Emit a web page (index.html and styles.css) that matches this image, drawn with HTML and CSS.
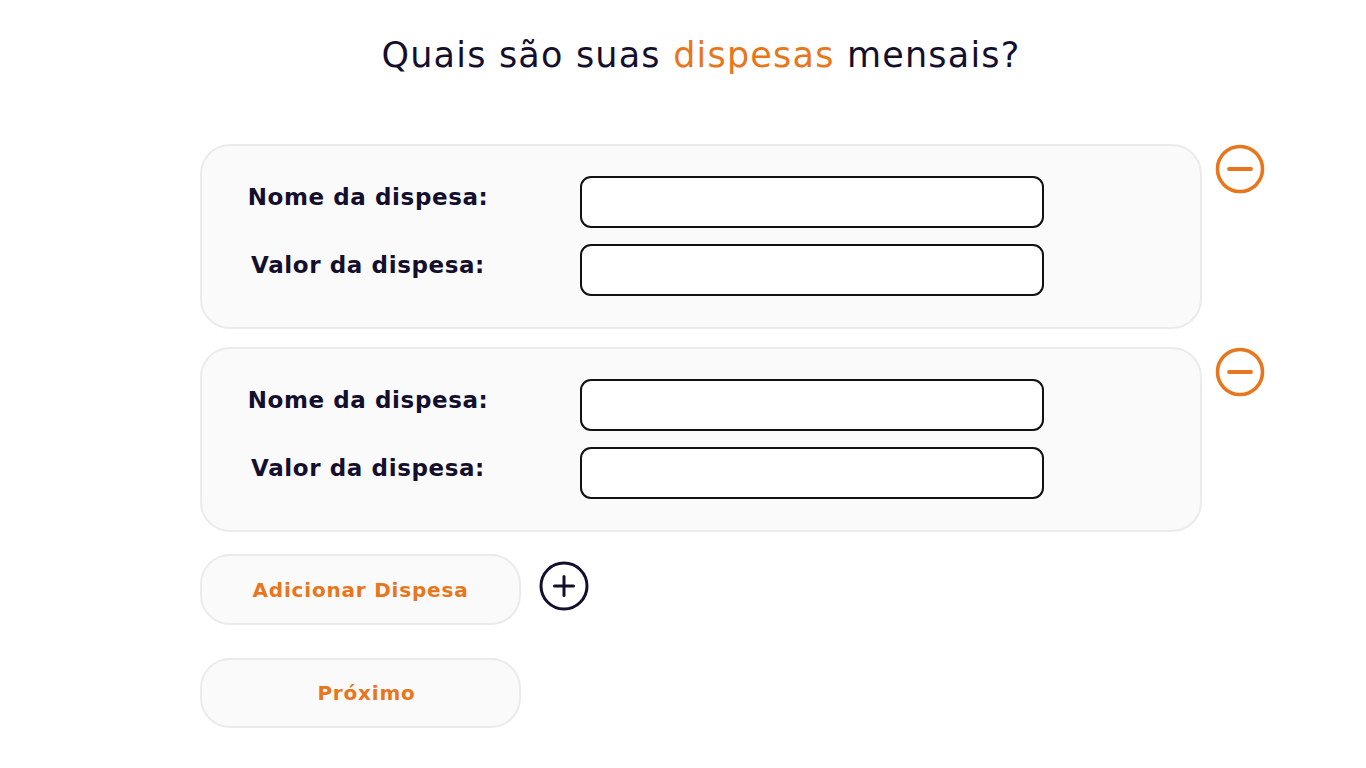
FILE: index.html
```html
<!DOCTYPE html>
<html lang="pt-BR">
<head>
<meta charset="utf-8">
<title>Dispesas mensais</title>
<link rel="stylesheet" href="styles.css">
</head>
<body>
<main class="page">
  <h1 class="title">Quais são suas <span class="accent">dispesas</span> mensais?</h1>

  <section class="list">
    <div class="row">
      <div class="card">
        <label class="label" for="n1">Nome da dispesa:</label>
        <input class="field" id="n1" type="text">
        <label class="label" for="v1">Valor da dispesa:</label>
        <input class="field" id="v1" type="text">
      </div>
      <button class="icon-btn remove" aria-label="Remover">
        <svg viewBox="0 0 50 50" width="50" height="50"><circle cx="25" cy="25" r="22.5" fill="none" stroke="#e8761c" stroke-width="3.6"/><line x1="14" y1="25" x2="36" y2="25" stroke="#e8761c" stroke-width="3.8" stroke-linecap="round"/></svg>
      </button>
    </div>

    <div class="row">
      <div class="card">
        <label class="label" for="n2">Nome da dispesa:</label>
        <input class="field" id="n2" type="text">
        <label class="label" for="v2">Valor da dispesa:</label>
        <input class="field" id="v2" type="text">
      </div>
      <button class="icon-btn remove" aria-label="Remover">
        <svg viewBox="0 0 50 50" width="50" height="50"><circle cx="25" cy="25" r="22.5" fill="none" stroke="#e8761c" stroke-width="3.6"/><line x1="14" y1="25" x2="36" y2="25" stroke="#e8761c" stroke-width="3.8" stroke-linecap="round"/></svg>
      </button>
    </div>
  </section>

  <div class="actions">
    <button class="pill">Adicionar Dispesa</button>
    <button class="icon-btn add" aria-label="Adicionar">
      <svg viewBox="0 0 50 50" width="50" height="50"><circle cx="25" cy="25" r="23" fill="none" stroke="#150f2e" stroke-width="3"/><line x1="15.5" y1="25" x2="34.5" y2="25" stroke="#150f2e" stroke-width="3" stroke-linecap="round"/><line x1="25" y1="15.5" x2="25" y2="34.5" stroke="#150f2e" stroke-width="3" stroke-linecap="round"/></svg>
    </button>
  </div>

  <div class="actions next">
    <button class="pill pill-next">Próximo</button>
  </div>
</main>
</body>
</html>
```

FILE: styles.css
```css
* { box-sizing: border-box; }

html, body {
  margin: 0;
  background: #ffffff;
  font-family: "DejaVu Sans", "Liberation Sans", sans-serif;
  color: #150f2e;
}

.page {
  padding: 29px 0 0 200px;
  width: 1366px;
}

.title {
  margin: 0;
  width: 1002px;
  text-align: center;
  font-size: 35px;
  font-weight: 400;
  line-height: 52px;
  letter-spacing: 1.2px;
}

.accent { color: #e8761c; }

.list {
  display: flex;
  flex-direction: column;
  gap: 18px;
  margin-top: 63px;
}

.row {
  display: flex;
  align-items: flex-start;
  gap: 13px;
}

.card {
  width: 1002px;
  background: #fafafa;
  border: 2px solid #ebebeb;
  border-radius: 30px;
  padding: 30px 0 31px 0;
  display: grid;
  grid-template-columns: 332px 464px;
  column-gap: 46px;
  row-gap: 16px;
  align-items: center;
}

.label {
  text-align: center;
  font-weight: 700;
  font-size: 23px;
  letter-spacing: 0.6px;
  color: #150f2e;
  position: relative;
  top: -5px;
}

.field {
  height: 52px;
  width: 464px;
  border: 2px solid #111111;
  border-radius: 11px;
  background: #ffffff;
  font: inherit;
}

.icon-btn {
  border: 0;
  padding: 0;
  background: none;
  width: 50px;
  height: 50px;
  display: block;
}

.icon-btn svg { display: block; }

.remove { margin-top: 0; }

.actions {
  display: flex;
  align-items: center;
  gap: 18px;
  margin-top: 22px;
}

.actions.next { margin-top: 33px; }

.add { margin-top: -8px; }

.pill {
  width: 321px;
  height: 71px;
  background: #fafafa;
  border: 2px solid #ebebeb;
  border-radius: 30px;
  color: #e8761c;
  font-family: inherit;
  font-weight: 700;
  font-size: 20px;
  letter-spacing: 0.8px;
}

.pill-next {
  height: 70px;
  padding-left: 18px;
}
```
